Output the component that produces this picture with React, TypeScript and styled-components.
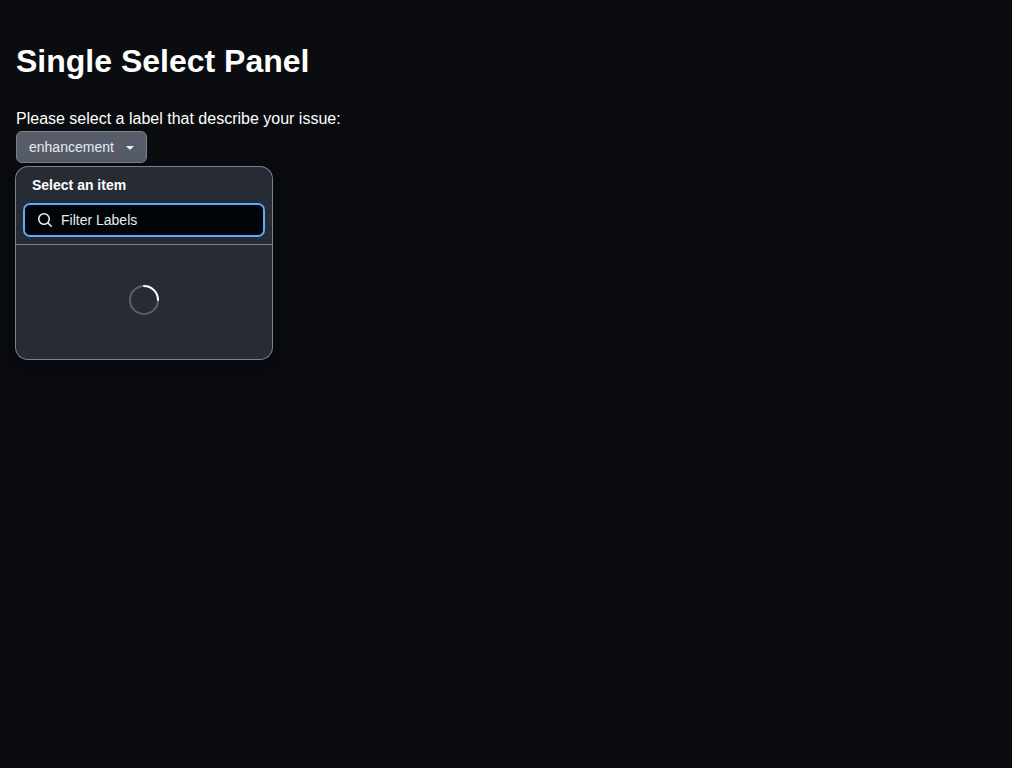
import React from 'react';
import styled, { createGlobalStyle } from 'styled-components';

const GlobalStyle = createGlobalStyle`
  *, *::before, *::after { box-sizing: border-box; }
  body {
    margin: 0;
    background: #0a0c10;
    color: #ffffff;
    font: 16px/1.5 "Liberation Sans", Arial, sans-serif;
  }
`;

const Page = styled.main`
  min-height: 100vh;
  padding: 16px;
`;

const Title = styled.h1`
  margin: 0.67em 0;
  font-size: 32px;
  font-weight: 700;
`;

const Anchor = styled.div`
  position: relative;
  width: max-content;
`;

const SelectButton = styled.button`
  display: flex;
  align-items: center;
  gap: 8px;
  height: 32px;
  padding: 0 8px 0 12px;
  border: 1px solid #7a828e;
  border-radius: 6px;
  background: #575d68;
  color: #e6e9ed;
  font: 500 14px/20px "Liberation Sans", Arial, sans-serif;
`;

const Caret = styled.svg`
  color: #f0f3f6;
`;

const Overlay = styled.section`
  position: absolute;
  top: 36px;
  left: 0;
  display: flex;
  flex-direction: column;
  width: 256px;
  height: 192px;
  overflow: hidden;
  border-radius: 12px;
  background: #272b33;
  box-shadow: 0 0 0 1px #7a828e, 0 6px 12px -3px rgba(1, 4, 9, 0.4), 0 6px 18px rgba(1, 4, 9, 0.4);
  color: #f0f3f6;
`;

const PanelTitle = styled.h2`
  margin: 0;
  padding: 8px 16px 0;
  color: #ffffff;
  font-size: 14px;
  line-height: 21px;
  font-weight: 700;
`;

const SearchField = styled.label`
  display: flex;
  align-items: center;
  gap: 8px;
  height: 32px;
  margin: 8px 8px 0;
  padding: 0 12px;
  border: 1px solid #5cacff;
  border-radius: 6px;
  background: #010409;
  box-shadow: 0 0 0 1px #5cacff;
`;

const SearchInput = styled.input`
  flex: 1;
  min-width: 0;
  padding: 0;
  border: 0;
  outline: 0;
  background: transparent;
  color: #f0f3f6;
  font: 14px/20px "Liberation Sans", Arial, sans-serif;
  &::placeholder { color: #e9ecef; opacity: 1; }
`;

const Loading = styled.div`
  display: flex;
  flex: 1;
  justify-content: center;
  margin-top: 8px;
  padding-top: 39px;
  border-top: 1px solid #7a828e;
`;

export default function App() {
  return (
    <Page>
      <GlobalStyle />
      <Title>Single Select Panel</Title>
      <div>Please select a label that describe your issue:</div>
      <Anchor>
        <SelectButton type="button">
          enhancement
          <Caret width="16" height="16" viewBox="0 0 16 16" fill="currentColor">
            <path d="m4.427 7.427 3.396 3.396a.25.25 0 0 0 .354 0l3.396-3.396A.25.25 0 0 0 11.396 7H4.604a.25.25 0 0 0-.177.427Z" />
          </Caret>
        </SelectButton>
        <Overlay>
          <PanelTitle>Select an item</PanelTitle>
          <SearchField>
            <svg width="16" height="16" viewBox="0 0 16 16" fill="currentColor">
              <path d="M10.68 11.74a6 6 0 0 1-7.922-8.982 6 6 0 0 1 8.982 7.922l3.04 3.04a.749.749 0 0 1-.326 1.275.749.749 0 0 1-.734-.215ZM11.5 7a4.499 4.499 0 1 0-8.997 0A4.499 4.499 0 0 0 11.5 7Z" />
            </svg>
            <SearchInput placeholder="Filter Labels" />
          </SearchField>
          <Loading>
            <svg width="32" height="32" viewBox="0 0 16 16" fill="none" stroke="#ffffff">
              <circle cx="8" cy="8" r="7" strokeOpacity="0.25" vectorEffect="non-scaling-stroke" strokeWidth="2" />
              <path d="M15 8a7 7 0 0 0-7-7" strokeLinecap="round" vectorEffect="non-scaling-stroke" strokeWidth="2" />
            </svg>
          </Loading>
        </Overlay>
      </Anchor>
    </Page>
  );
}
